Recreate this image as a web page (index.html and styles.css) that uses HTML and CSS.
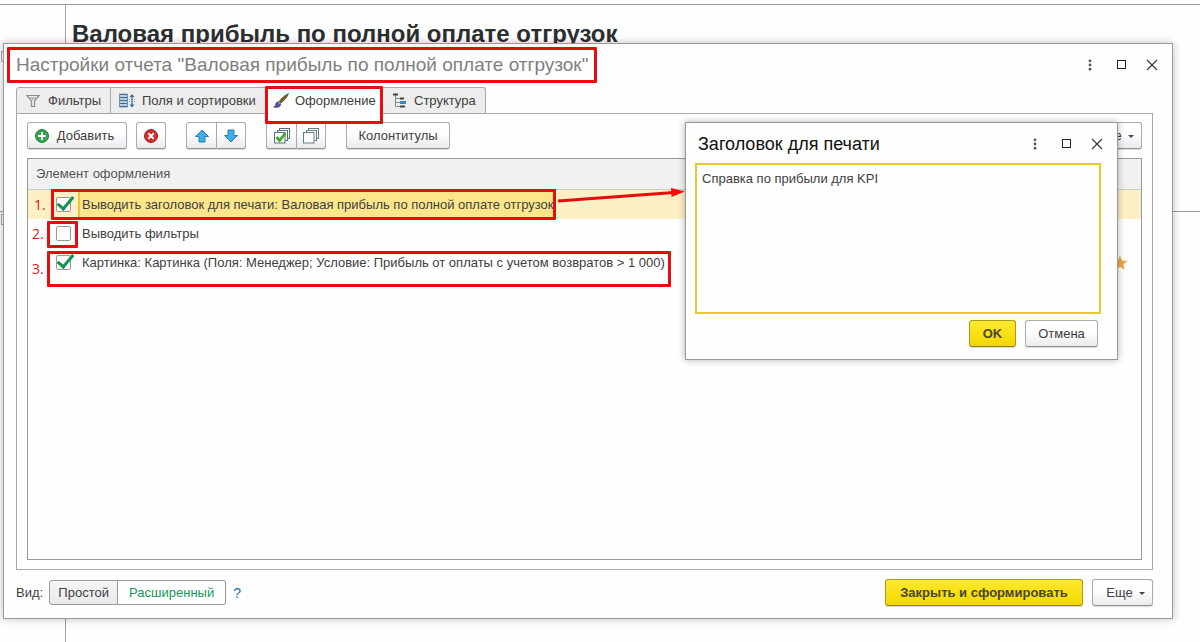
FILE: index.html
```html
<!DOCTYPE html>
<html lang="ru">
<head>
<meta charset="utf-8">
<title>Настройки отчета</title>
<link rel="stylesheet" href="styles.css">
</head>
<body>
<div class="desktop">
  <div class="report">
    <div class="report-gutter"></div>
    <h1 class="report-title">Валовая прибыль по полной оплате отгрузок</h1>
  </div>
  <div class="report-line"></div>
  <div class="fold fold-top"></div>
  <div class="fold fold-mid"></div>

  <section class="window settings" aria-label="Настройки отчета">
    <header class="window-head">
      <h2 class="window-title">Настройки отчета "Валовая прибыль по полной оплате отгрузок"</h2>
      <div class="window-controls">
        <button class="ctl" type="button" aria-label="Меню"><svg width="12" height="12"><g fill="#555"><circle cx="6" cy="1.8" r="1.4"/><circle cx="6" cy="6" r="1.4"/><circle cx="6" cy="10.2" r="1.4"/></g></svg></button>
        <button class="ctl" type="button" aria-label="Развернуть"><svg width="12" height="12"><rect x="2.5" y="1.5" width="8" height="8" fill="none" stroke="#222"/></svg></button>
        <button class="ctl" type="button" aria-label="Закрыть"><svg width="12" height="12"><path d="M1 1l10 10M11 1L1 11" fill="none" stroke="#333" stroke-width="1.1"/></svg></button>
      </div>
      <div class="mark mark-title"></div>
    </header>

    <nav class="tabs">
      <button class="tab tab-filters" type="button">
        <svg width="16" height="16"><path d="M2 2.5h12L9.5 8v5.500h-3V8z" fill="#eee" stroke="#8c8c8c" stroke-width="1.2"/><path d="M4 4h8L8 7.500z" fill="#bbb"/></svg>
        <span>Фильтры</span></button>
      <button class="tab tab-fields" type="button">
        <svg width="16" height="16"><path d="M0 1.5h9M0 4.5h9M0 7.5h9M0 10.5h9M0 13.5h9" stroke="#3f6c93" stroke-width="1.6" fill="none"/><path d="M.5 1v13M8.5 1v13" stroke="#6a93b5" fill="none"/><path d="M13 2v11" stroke="#3f6c93" stroke-width="1.3" fill="none"/><path d="M10.5 4L13 1l2.500 3zM10.500 11.500L13 14.500l2.500-3z" fill="#3f6c93"/><path d="M10.500 6v4M15.500 6v4" stroke="#79a2c4" stroke-dasharray="1 1"/></svg>
        <span>Поля и сортировки</span></button>
      <button class="tab tab-design active" type="button">
        <svg width="16" height="16"><path d="M15.500 .5C12 2 8.500 5 6 8.500l1.800 1.700C11 7.500 14.500 4 15.500.5z" fill="#76602a" stroke="#4e431f" stroke-width=".6"/><path d="M5.800 8.700c-2.300 0-3 1.300-3.200 2.800C2.400 13 1.500 13.500.5 14c3 1 7.300.5 7.300-3.300z" fill="#55559a" stroke="#373768" stroke-width=".6"/><path d="M5.500 9l2 2" stroke="#c8c8d8"/></svg>
        <span>Оформление</span>
        <i class="mark mark-tab"></i></button>
      <button class="tab tab-structure" type="button">
        <svg width="16" height="16"><path d="M4.500 2v11.500H9M5 5.500h4M5 9.500h4" stroke="#888" fill="none"/><path d="M2 1.500h5" stroke="#444" stroke-width="2"/><path d="M9 5.500h4M9 13.500h5" stroke="#444" stroke-width="2"/><path d="M9 9.500h6" stroke="#3388c8" stroke-width="3"/></svg>
        <span>Структура</span></button>
    </nav>

    <div class="panel">
      <div class="toolbar">
        <button class="btn btn-add" type="button">
          <svg width="14" height="14"><circle cx="7" cy="7" r="6.500" fill="#36a34f" stroke="#23813a"/><path d="M7 3v8M3 7h8" stroke="#fff" stroke-width="2"/></svg>
          <span>Добавить</span></button>
        <button class="btn btn-icon" type="button" aria-label="Удалить">
          <svg width="14" height="14"><circle cx="7" cy="7" r="6.500" fill="#d62b2b" stroke="#a81d1d"/><path d="M4.300 4.300l5.400 5.400M9.700 4.300L4.300 9.700" stroke="#fff" stroke-width="2"/></svg></button>
        <div class="group">
          <button class="btn btn-icon" type="button" aria-label="Вверх">
            <svg width="16" height="14"><path d="M8 1l6.500 6.500H11V13H5V7.500H1.500z" fill="#42aee8" stroke="#2a7fb5"/></svg></button>
          <button class="btn btn-icon" type="button" aria-label="Вниз">
            <svg width="16" height="14"><path d="M8 13l6.500-6.500H11V1H5v5.500H1.500z" fill="#42aee8" stroke="#2a7fb5"/></svg></button>
        </div>
        <div class="group">
          <button class="btn btn-icon" type="button" aria-label="Установить флажки">
            <svg width="16" height="16"><g fill="#fff" stroke="#52717c"><rect x="5.500" y=".5" width="10" height="10"/><rect x="3.500" y="2.500" width="10" height="10"/><rect x=".5" y="4.500" width="10.500" height="10.500"/></g><path d="M2.500 9l3 3.500L11.500 5" fill="none" stroke="#43a72d" stroke-width="2.800"/></svg></button>
          <button class="btn btn-icon" type="button" aria-label="Снять флажки">
            <svg width="16" height="16"><g fill="#fff" stroke="#64808a"><rect x="5.500" y=".5" width="10" height="10"/><rect x="3.500" y="2.500" width="10" height="10"/><rect x=".5" y="4.500" width="10.500" height="10.500"/></g></svg></button>
        </div>
        <button class="btn btn-text" type="button">Колонтитулы</button>
        <button class="btn btn-more push" type="button">Еще <i class="caret"></i></button>
      </div>

      <div class="list">
        <table class="items">
          <colgroup><col class="col-num"><col class="col-check"><col class="col-name"><col></colgroup>
          <thead><tr><th colspan="4">Элемент оформления</th></tr></thead>
          <tbody>
            <tr class="selected">
              <td class="num">1.</td>
              <td class="check"><input type="checkbox" id="c1" checked></td>
              <td class="name"><label for="c1">Выводить заголовок для печати: Валовая прибыль по полной оплате отгрузок</label><i class="mark mark-one"></i></td>
              <td class="fav"></td>
            </tr>
            <tr>
              <td class="num">2.</td>
              <td class="check"><input type="checkbox" id="c2"><i class="mark mark-two"></i></td>
              <td class="name"><label for="c2">Выводить фильтры</label></td>
              <td class="fav"></td>
            </tr>
            <tr>
              <td class="num low">3.</td>
              <td class="check"><input type="checkbox" id="c3" checked></td>
              <td class="name"><label for="c3">Картинка: Картинка (Поля: Менеджер; Условие: Прибыль от оплаты с учетом возвратов &gt; 1 000)</label><i class="mark mark-three"></i></td>
              <td class="fav"><svg width="16" height="16"><path d="M8 .5l2 5 5.500.5-4.200 3.500 1.400 5.500L8 12l-4.700 3 1.400-5.500L.5 6 6 5.500z" fill="#f0a848"/></svg></td>
            </tr>
          </tbody>
        </table>
      </div>
    </div>

    <footer class="window-foot">
      <span class="foot-label">Вид:</span>
      <div class="switch">
        <button type="button">Простой</button>
        <button type="button" class="on">Расширенный</button>
      </div>
      <a class="help" href="#">?</a>
      <button class="btn btn-primary btn-run push" type="button">Закрыть и сформировать</button>
      <button class="btn btn-more" type="button">Еще <i class="caret"></i></button>
    </footer>
  </section>

  <section class="window popup" aria-label="Заголовок для печати">
    <header class="window-head">
      <h2 class="window-title">Заголовок для печати</h2>
      <div class="window-controls">
        <button class="ctl" type="button" aria-label="Меню"><svg width="12" height="12"><g fill="#555"><circle cx="6" cy="1.800" r="1.400"/><circle cx="6" cy="6" r="1.400"/><circle cx="6" cy="10.200" r="1.400"/></g></svg></button>
        <button class="ctl" type="button" aria-label="Развернуть"><svg width="12" height="12"><rect x="2.500" y="1.500" width="8" height="8" fill="none" stroke="#222"/></svg></button>
        <button class="ctl" type="button" aria-label="Закрыть"><svg width="12" height="12"><path d="M1 1l10 10M11 1L1 11" fill="none" stroke="#333" stroke-width="1.100"/></svg></button>
      </div>
    </header>
    <textarea class="popup-text" aria-label="Текст заголовка">Справка по прибыли для KPI</textarea>
    <div class="popup-actions">
      <button class="btn btn-primary btn-ok" type="button">OK</button>
      <button class="btn btn-cancel" type="button">Отмена</button>
    </div>
  </section>

  <svg class="arrow" width="130" height="20"><path d="M2 13L118 4.500" stroke="#e60c0c" stroke-width="3"/><path d="M115 0l14 3.500L115.500 9z" fill="#fb0808"/></svg>
</div>
</body>
</html>
```
FILE: styles.css
```css
* { box-sizing: border-box; }
body {
  margin: 0;
  background: #fefefe;
  color: #404040;
  font: 13px/16px "Liberation Sans", Arial, sans-serif;
}
button, input, textarea { font: inherit; color: inherit; }
button { padding: 0; }
h1, h2 { margin: 0; }
svg { display: block; flex: none; }

.desktop { position: relative; height: 100vh; min-height: 480px; overflow: hidden; padding-top: 4px; }
.report { display: flex; height: 100%; border-top: 1px solid #999; }
.report-gutter { width: 66px; border-right: 1px solid #a0a0a0; }
.report-title { padding: 14px 6px; font-size: 24px; line-height: 30px; color: #2b2f2f; }
.report-line { position: absolute; left: 0; right: 0; top: 211px; border-top: 1px solid #999; }
.fold { position: absolute; left: 1px; width: 8px; height: 11px; border: 1px solid #aaa; }
.fold-top { top: 51px; }
.fold-mid { top: 214px; }

.window { position: absolute; display: flex; flex-direction: column; background: #fefefe; border: 1px solid #999; }
.settings { inset: 43px 27px 23px 3px; padding: 0 19px 0 12px; box-shadow: 0 0 8px rgba(0, 0, 0, .25); }
.window-head { position: relative; display: flex; align-items: center; justify-content: space-between; height: 42px; }
.window-title { font-size: 19px; line-height: 24px; font-weight: normal; color: #808080; white-space: nowrap; }
.window-controls { display: flex; gap: 19px; }
.settings .window-controls { margin-right: -5px; }
.ctl { width: 12px; height: 12px; border: 0; background: none; }

.mark { position: absolute; border: 3px solid #e80c0c; border-radius: 1px; pointer-events: none; z-index: 2; }
.mark-title { left: -9px; top: 3px; width: 590px; height: 36px; }

.tabs { display: flex; height: 28px; padding-top: 1px; }
.tab {
  position: relative; display: flex; align-items: center; gap: 7px;
  height: 27px; padding: 0 8px; border: 1px solid #a8a8a8; border-left-width: 0;
  background: #ededee; white-space: nowrap;
}
.tab-filters { width: 95px; border-left-width: 1px; border-radius: 3px 0 0 0; }
.tab-fields { width: 155px; }
.tab-structure { width: 103px; border-radius: 0 3px 0 0; }
.tab.active { width: 117px; gap: 6px; padding-left: 7px; background: #fefefe; border-bottom-color: #fefefe; z-index: 1; }
.mark-tab { left: -1px; top: -2px; right: -1px; height: 38px; }

.panel { flex: 1; display: flex; flex-direction: column; gap: 9px; margin-top: -1px; padding: 8px 10px 9px; border: 1px solid #a8a8a8; min-height: 0; }
.toolbar { display: flex; }
.btn {
  display: flex; align-items: center; justify-content: center;
  height: 27px; border: 1px solid #ababab; border-bottom-color: #909090; border-radius: 3px;
  background: linear-gradient(#fff 40%, #ebebee); box-shadow: 0 1px 1px rgba(0, 0, 0, .15); white-space: nowrap;
}
.btn-add { width: 100px; gap: 8px; padding-right: 5px; margin-right: 9px; }
.btn-icon { width: 30px; }
.group { display: flex; margin-left: 20px; }
.group .btn:first-child { width: 31px; border-radius: 3px 0 0 3px; }
.group .btn + .btn { border-left: 0; border-radius: 0 3px 3px 0; width: 29px; }
.btn-text { width: 104px; margin-left: 20px; }
.btn-more { width: 61px; gap: 6px; padding-left: 6px; }
.push { margin-left: auto; }
.caret { border: 3px solid transparent; border-top-color: #444; border-bottom-width: 0; margin-top: 2px; }
.btn-primary { border-color: #a89a20; border-bottom-color: #8c8010; background: linear-gradient(#ffe92e, #f2d800); font-weight: bold; color: #4a4630; }

.list { flex: 1; min-height: 0; border: 1px solid #999; }
.items { width: 100%; table-layout: fixed; border-collapse: separate; border-spacing: 0; }
.col-num { width: 23px; }
.col-check { width: 27px; }
.col-name { width: 477px; }
.items th { height: 31px; padding: 0 8px; text-align: left; font-weight: normal; color: #555; background: #f1f1f2; border-bottom: 1px solid #ccc; }
.items td { height: 29px; padding: 0; }
.items .num { padding-left: 4px; color: #e02020; font: 14px/16px "Open Sans", "Noto Sans", sans-serif; }
.items .selected .num { padding-left: 6px; }
.items .low { vertical-align: bottom; }
.check, .name { position: relative; }
.check input {
  appearance: none; display: block; width: 15px; height: 15px; margin: 0 0 0 5px;
  border: 1px solid #999; border-radius: 2px; background: #fff;
}
.check input:checked::after {
  content: ""; display: block; width: 14px; height: 6px; margin: -1px 0 0;
  border: solid #119553; border-width: 0 0 3px 3px; transform: rotate(-50deg);
}
.name label { padding-left: 4px; white-space: nowrap; }
.fav svg { margin-left: auto; margin-right: 13px; }
.selected td { background: #fdf0c6; }
.selected .name { background: #fce68c; border-left: 2px solid #f3c33a; }
.selected .name label { padding-left: 2px; }
.mark-one { left: -29px; right: -1px; top: -1px; height: 31px; }
.mark-two { left: -4px; top: 2px; width: 31px; height: 27px; }
.mark-three { left: -31px; width: 624px; top: 3px; height: 36px; }

.window-foot { display: flex; align-items: center; height: 48px; padding-bottom: 3px; }
.foot-label { margin-right: 6px; }
.switch { display: flex; }
.switch button { width: 69px; height: 25px; border: 1px solid #999; border-radius: 3px 0 0 3px; background: linear-gradient(#f6f6f6, #e9e9eb); }
.switch button.on { width: 108px; border-left: 0; border-radius: 0 3px 3px 0; background: #fefefe; color: #16995a; }
.help { margin-left: 7px; color: #1b6fae; text-decoration: none; font-size: 14px; }
.btn-run { width: 198px; margin-right: 9px; }

.popup { left: 685px; top: 122px; width: 433px; padding: 0 9px 12px; box-shadow: 0 0 7px rgba(0, 0, 0, .3); }
.popup .window-head { height: 40px; padding: 1px 5px 0 3px; }
.popup .window-title { font-size: 18px; color: #111; }
.popup-text { width: 406px; height: 151px; padding: 6px 5px; border: 2px solid #e8ca30; outline: 0; resize: none; background: #fefefe; }
.popup-actions { display: flex; justify-content: flex-end; gap: 9px; padding: 6px 10px 0 0; }
.btn-ok { width: 47px; }
.btn-cancel { width: 73px; }
.arrow { position: absolute; left: 556px; top: 188px; }
```
